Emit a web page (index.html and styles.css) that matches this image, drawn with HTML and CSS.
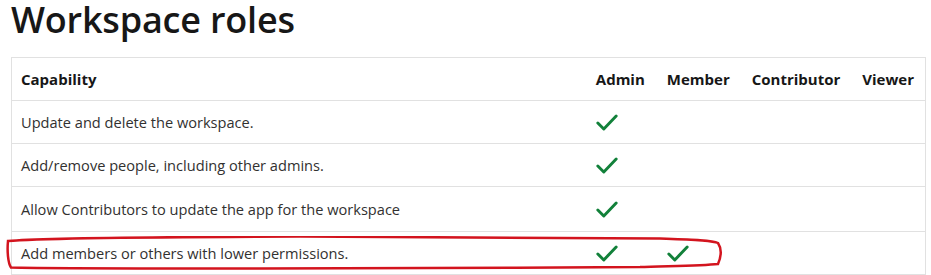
FILE: index.html
```html
<!DOCTYPE html>
<html lang="en">
<head>
    <meta charset="UTF-8">
    <title>Workspace roles</title>
    <link rel="stylesheet" href="styles.css">
</head>
<body>
    <h1>Workspace roles</h1>

    <div class="table-wrap">
        <table class="roles">
            <thead>
                <tr>
                    <th class="cap">Capability</th>
                    <th>Admin</th>
                    <th>Member</th>
                    <th>Contributor</th>
                    <th>Viewer</th>
                </tr>
            </thead>
            <tbody>
                <tr>
                    <td class="cap">Update and delete the workspace.</td>
                    <td><svg class="check" viewBox="0 0 24 20"><path d="M2 10.5l6.5 6.5L22 3"/></svg></td>
                    <td></td><td></td><td></td>
                </tr>
                <tr>
                    <td class="cap">Add/remove people, including other admins.</td>
                    <td><svg class="check" viewBox="0 0 24 20"><path d="M2 10.5l6.5 6.5L22 3"/></svg></td>
                    <td></td><td></td><td></td>
                </tr>
                <tr>
                    <td class="cap">Allow Contributors to update the app for the workspace</td>
                    <td><svg class="check" viewBox="0 0 24 20"><path d="M2 10.5l6.5 6.5L22 3"/></svg></td>
                    <td></td><td></td><td></td>
                </tr>
                <tr>
                    <td class="cap">Add members or others with lower permissions.</td>
                    <td><svg class="check" viewBox="0 0 24 20"><path d="M2 10.5l6.5 6.5L22 3"/></svg></td>
                    <td><svg class="check" viewBox="0 0 24 20"><path d="M2 10.5l6.5 6.5L22 3"/></svg></td>
                    <td></td><td></td>
                </tr>
            </tbody>
        </table>

        <!-- red marker drawn round the last row -->
        <svg class="marker" width="740" height="40" viewBox="0 0 740 40">
            <path d="M8 5 C40 2 150 1 300 0.5 C460 0.5 600 1.5 660 2.5 C690 3.5 712 4 718 7 C722 13 721 21 718 28 C700 30 660 30 640 31 C500 32 300 33 260 32.5 C150 32.5 40 32.5 11 31.5 C8 27 7 15 8 5 Z"/>
        </svg>
    </div>
</body>
</html>
```

FILE: styles.css
```css
body {
    margin: 0;
    padding: 0 6px 0 11px;
    font-family: "Open Sans", "Noto Sans", sans-serif;
    color: #323130;
    background: #ffffff;
}
h1 {
    margin: -4px 0 0;
    font-size: 36px;
    font-weight: 600;
    line-height: 48px;
    color: #171717;
    letter-spacing: -0.2px;
}
.table-wrap {
    position: relative;
    margin-top: 13px;
}
.roles {
    width: 915px;
    border-collapse: collapse;
    font-size: 14.6px;
}
.roles th,
.roles td {
    border-top: 1px solid #e1e1e1;
    border-bottom: 1px solid #e1e1e1;
    padding: 0 11px;
    height: 42px;
    text-align: left;
    white-space: nowrap;
    vertical-align: middle;
}
.roles th {
    font-size: 15px;
    font-weight: 700;
    color: #171717;
}
.roles tr > :first-child {
    border-left: 1px solid #e1e1e1;
    padding-left: 9px;
}
.roles tr > :last-child {
    border-right: 1px solid #e1e1e1;
}
.roles tbody tr:nth-child(3) td {
    height: 44px;
}
.roles .cap {
    width: 100%;
}
.check {
    display: block;
    width: 22px;
    height: 19px;
    fill: none;
    stroke: #12813a;
    stroke-width: 3.2;
    stroke-linecap: round;
    stroke-linejoin: round;
}
.marker {
    position: absolute;
    left: -11px;
    top: 179px;
    fill: none;
    stroke: #d3141e;
    stroke-width: 2.5;
}
```
